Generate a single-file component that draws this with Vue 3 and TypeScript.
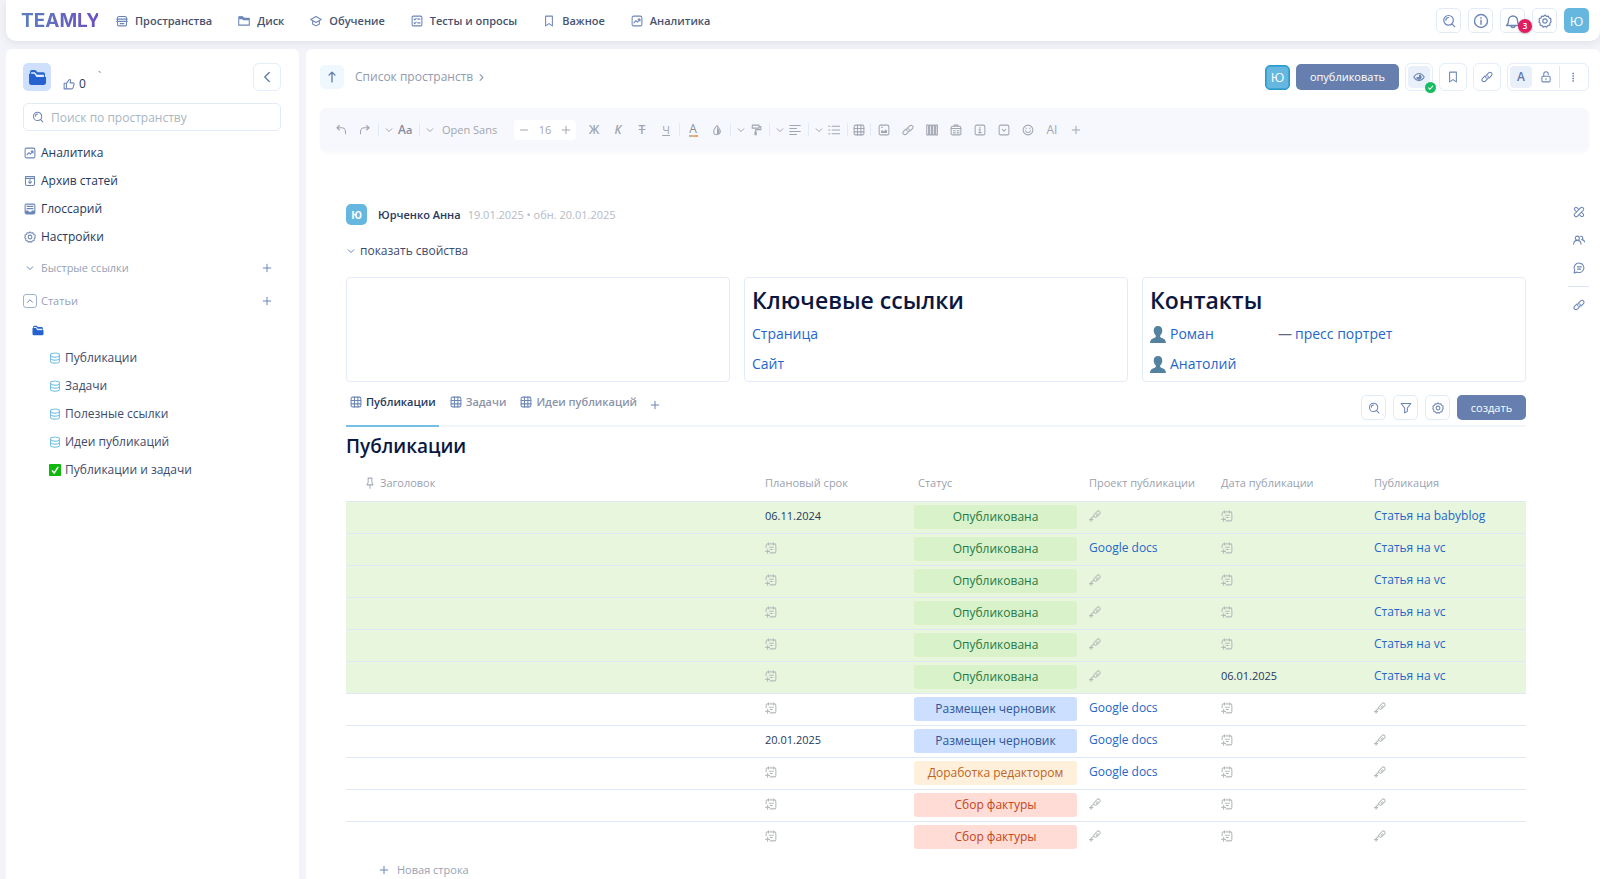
<script setup lang="ts">
import { h, ref } from 'vue'

/* Outline icons on a 16 x 16 grid. A leading "!" marks a filled shape. */
const glyphs: Record<string, string[]> = {
  spaces: ['M2 5V4a2 2 0 0 1 2-2h8a2 2 0 0 1 2 2v9a1.500 1.500 0 0 1-1.500 1.500h-9A1.500 1.500 0 0 1 2 13z', 'M1 5.500h14M1 8.500h14M5.500 11.500h5'],
  disk: ['M1 13.500v-11h5l2 2h7v9z', '!M1.500 2h4.500l2 2h7v3H7L5.500 5.500h-4z'],
  study: ['M8 2 15 6 8 10 1 6z', 'M3.500 8v4L8 14.500l4.500-2.500V8'],
  tests: ['M3 1.500h10A1.500 1.500 0 0 1 14.500 3v10a1.500 1.500 0 0 1-1.500 1.500H3A1.500 1.500 0 0 1 1.500 13V3A1.500 1.500 0 0 1 3 1.500z', 'M4 5.500l1 1 2-2M4 10.500l1 1 2-2M9 5.500h3M9 10.500h3'],
  bookmark: ['M3.500 1.500h9v13L8 11.500l-4.500 3z'],
  chart: ['M3.500 1.500h9a2 2 0 0 1 2 2v9a2 2 0 0 1-2 2h-9a2 2 0 0 1-2-2v-9a2 2 0 0 1 2-2z', 'M4 10.500l2.500-3 2 2L12 5.500M9.500 5.500H12V8'],
  search: ['M13 7.200a5.500 5.500 0 1 1-11 0 5.500 5.500 0 0 1 11 0z', 'M11.500 11.500l3 3M4.500 7a3 3 0 0 1 3-3'],
  info: ['M14.500 8a6.500 6.500 0 1 1-13 0 6.500 6.500 0 0 1 13 0z', 'M8 7.300v4M8 4.600v.6'],
  bell: ['M1.500 12.500c1.500-1 2-2 2-5a4.500 4.500 0 0 1 9 0c0 3 .5 4 2 5zM6 12.500a2 2 0 0 0 4 0'],
  gear: ['M8 1.200l1.700 1.500 2.200-.3.800 2.100 2.100.9-.3 2.200L15 9l-1.400 1.500-.1 2.200-2.200.5L9.800 15 8 14l-2 1-1.300-1.800-2.200-.5-.1-2.200L1 9l.6-1.400-.3-2.200 2.100-.9.800-2.100 2.200.3z', 'M10.500 8a2.500 2.500 0 1 1-5 0 2.500 2.500 0 0 1 5 0z'],
  left: ['M11 2 5 8l6 6'],
  right: ['M5.500 3l5 5-5 5'],
  down: ['M3.500 6 8 10.500 12.500 6'],
  up: ['M4 10l4-4 4 4'],
  arrowUp: ['M8 14.500v-13M4 5.500 8 1.500l4 4'],
  plus: ['M8 2v12M2 8h12'],
  minus: ['M2.500 8h11'],
  like: ['M1.500 7h3v7.500h-3zM4.500 7.500 8 2.500c1.500-1.200 2.500 0 2 1.500L9.500 6.500h4c1 0 1.500.8 1.200 1.800l-1.400 5c-.2.800-.8 1.200-1.500 1.200H4.500'],
  archive: ['M2 2h12v2.500H2zM2 4.500V12a2 2 0 0 0 2 2h8a2 2 0 0 0 2-2V4.500', 'M8 6v5M5.800 9 8 11.200 10.200 9'],
  glossary: ['M3 1.500h10A1.500 1.500 0 0 1 14.500 3v9.500a2 2 0 0 1-2 2h-9a2 2 0 0 1-2-2V3A1.500 1.500 0 0 1 3 1.500z', '!M1.500 10h4l1 1.500h3l1-1.500h4v3l-1.500 1.500H3L1.500 13z', 'M4 4.500h8M4 7.500h8'],
  base: ['M8 1.200c3.500 0 6 1.200 6 2.800S11.500 6.800 8 6.800 2 5.600 2 4s2.500-2.800 6-2.800z', 'M2 4v8c0 1.600 2.500 2.800 6 2.800s6-1.200 6-2.800V4', 'M2 8c0 1.600 2.500 2.800 6 2.800S14 9.600 14 8'],
  eye: ['M1 8c2-3.200 4.200-4.800 7-4.800S13 4.800 15 8c-2 3.200-4.200 4.800-7 4.800S3 11.200 1 8z', '!M8 4.500v3.500H4.500A3.500 3.500 0 1 0 8 4.500z'],
  link: ['M7 9.500a2.600 2.600 0 0 1 0-3.700l3.200-3.200a2.600 2.600 0 0 1 3.700 3.700L11 9.200', 'M9 6.500a2.600 2.600 0 0 1 0 3.700l-3.200 3.200a2.600 2.600 0 0 1-3.700-3.700L5 6.800'],
  unlock: ['M4 7h8a1.500 1.500 0 0 1 1.500 1.500V13a1.500 1.500 0 0 1-1.500 1.500H4A1.500 1.500 0 0 1 2.500 13V8.500A1.500 1.500 0 0 1 4 7z', 'M5 7V4a3 3 0 0 1 6 0v1M8 10v1.500'],
  dots: ['!M7 1h2.500v2.500H7z', '!M7 5h2.500v2.500H7z', '!M7 9h2.500v2.500H7z', '!M7 13h2.500v2.500H7z'],
  undo: ['M6 2 2.500 5 6 8M2.500 5H9a5 5 0 0 1 5 5v3'],
  redo: ['M10 2l3.500 3L10 8M13.500 5H7a5 5 0 0 0-5 5v3'],
  drop: ['M8 2C10.500 5 12.500 7 12.500 9.800a4.500 4.500 0 0 1-9 0C3.500 7 5.500 5 8 2z', '!M8 7v6.500a3.500 3.500 0 0 0 3.500-3.500C11.500 8 9.500 7 8 3z'],
  roller: ['M3 1.500h9v4H3zM12 3.500h2.500v4H7.500v2.500', '!M6 10h3v5H6z'],
  align: ['M1 2h14M1 6h9M1 10h14M1 14h9'],
  list: ['M5.500 3h10M5.500 8h10M5.500 13h10M1 3h1.500M1 8h1.500M1 13h1.500'],
  table: ['M3.500 1.500h9a2 2 0 0 1 2 2v9a2 2 0 0 1-2 2h-9a2 2 0 0 1-2-2v-9a2 2 0 0 1 2-2z', 'M1.500 6h13M1.500 10.500h13M6 1.500v13M10.500 1.500v13'],
  image: ['M3.500 1.500h9a2 2 0 0 1 2 2v9a2 2 0 0 1-2 2h-9a2 2 0 0 1-2-2v-9a2 2 0 0 1 2-2z', '!M4 12V9.500L6 8l2 2 2.500-3L12 9v3z', 'M5 4.500h.8'],
  columns: ['M1 1.500h2.500v13H1zM5 1.500h2.500v13H5zM9 1.500h2.500v13H9zM13 1.500h2.200v13H13z'],
  form: ['M3.500 3h9a2 2 0 0 1 2 2v7.500a2 2 0 0 1-2 2h-9a2 2 0 0 1-2-2V5a2 2 0 0 1 2-2z', 'M5.500 3V1.500h5V3M1.500 6h13M4.500 9H7M9.500 9H12M4.500 11.800H7M9.500 11.800H12'],
  note: ['M3.500 1.500h9a2 2 0 0 1 2 2v9a2 2 0 0 1-2 2h-9a2 2 0 0 1-2-2v-9a2 2 0 0 1 2-2z', 'M6.800 7.500H8v4M6.500 11.500h3M8 4.500v1'],
  fold: ['M3.500 1.500h9a2 2 0 0 1 2 2v9a2 2 0 0 1-2 2h-9a2 2 0 0 1-2-2v-9a2 2 0 0 1 2-2z', 'M5.500 7 8 9.500 10.500 7'],
  smile: ['M14.500 8a6.500 6.500 0 1 1-13 0 6.500 6.500 0 0 1 13 0z', 'M4.800 9c.5 3.200 5.900 3.200 6.400 0M5.500 5.200v1M10.500 5.200v1'],
  filter: ['M1.500 2h13L9.800 8v4.500L6.200 14.500V8z'],
  pin: ['M5.500 1.500h5v6l1.500 3H4l1.500-3zM8 10.500V15'],
  date: ['M4 2.500H3.500a2 2 0 0 0-2 2v3M14.500 9V4.500a2 2 0 0 0-2-2H12M6.500 2.500h3M4.800 1v3M11.200 1v3M14.500 8.500v4a2 2 0 0 1-2 2H7', 'M6 7h5M7 10h3M3.500 10v5M1 12.500h5'],
  addLink: ['M7 9a2.200 2.200 0 0 1 0-3l3.800-4a2.300 2.300 0 0 1 3.300 3.300L10.200 9A2.200 2.200 0 0 1 7 9zM9.500 6.800l1.800-1.800', 'M6 8.500 4 10.500M2.800 10.500v4.500M.5 12.800h4.600'],
  tools: ['M10 2.500a2 2 0 1 1 3.500 3.500L6 13.500a2 2 0 1 1-3.500-3.500z', 'M5.500 2.500a2 2 0 1 0-3 3L5 8M8 5 5.500 2.500M11 8l2.500 2.500a2 2 0 1 1-3 3L8 11'],
  people: ['M8.500 5.500a2.700 2.700 0 1 1-5.400 0 2.700 2.700 0 0 1 5.400 0z', 'M.8 13.500C1 10.500 3 8.500 5.800 8.500s4.700 2 5 5M10 3a2.200 2.200 0 1 1 1.500 4.500c2 0 3.500 1 4 3'],
  chat: ['M8.500 1.500a6.300 6.300 0 1 1-3 12l-4 1 .8-4A6.200 6.200 0 0 1 8.500 1.500z', 'M6 6.500h5M6 9.500h4'],
}

const Icon = (props: { name: string }) =>
  h(
    'svg',
    { viewBox: '0 0 16 16', 'aria-hidden': 'true' },
    glyphs[props.name].map((d) =>
      d[0] === '!' ? h('path', { d: d.slice(1), fill: 'currentColor', stroke: 'none' }) : h('path', { d }),
    ),
  )
Icon.props = ['name']

const sections = [
  { icon: 'spaces', label: 'Пространства' },
  { icon: 'disk', label: 'Диск' },
  { icon: 'study', label: 'Обучение' },
  { icon: 'tests', label: 'Тесты и опросы' },
  { icon: 'bookmark', label: 'Важное' },
  { icon: 'chart', label: 'Аналитика' },
]

const spaceLinks = [
  { icon: 'chart', label: 'Аналитика' },
  { icon: 'archive', label: 'Архив статей' },
  { icon: 'glossary', label: 'Глоссарий' },
  { icon: 'gear', label: 'Настройки' },
]

const articles = ['Публикации', 'Задачи', 'Полезные ссылки', 'Идеи публикаций']

const inserts = [
  { icon: 'image', label: 'Изображение' },
  { icon: 'link', label: 'Ссылка' },
  { icon: 'columns', label: 'Колонки' },
  { icon: 'form', label: 'Умная таблица' },
  { icon: 'note', label: 'Заметка' },
  { icon: 'fold', label: 'Скрытый блок' },
  { icon: 'smile', label: 'Эмодзи' },
]

const tabs = ['Публикации', 'Задачи', 'Идеи публикаций']
const activeTab = ref(0)
const query = ref('')

type Tone = 'green' | 'blue' | 'amber' | 'red'
interface Row {
  due?: string
  status: string
  tone: Tone
  project?: string
  published?: string
  post?: string
}

const done = { status: 'Опубликована', tone: 'green' as Tone }
const draft = { status: 'Размещен черновик', tone: 'blue' as Tone, project: 'Google docs' }
const facts = { status: 'Сбор фактуры', tone: 'red' as Tone }

const rows: Row[] = [
  { ...done, due: '06.11.2024', post: 'Статья на babyblog' },
  { ...done, project: 'Google docs', post: 'Статья на vc' },
  { ...done, post: 'Статья на vc' },
  { ...done, post: 'Статья на vc' },
  { ...done, post: 'Статья на vc' },
  { ...done, published: '06.01.2025', post: 'Статья на vc' },
  { ...draft },
  { ...draft, due: '20.01.2025' },
  { status: 'Доработка редактором', tone: 'amber', project: 'Google docs' },
  { ...facts },
  { ...facts },
]
</script>

<template>
  <div class="page">
    <header class="header">
      <a class="logo" href="#">TEAMLY</a>
      <nav class="sections">
        <a v-for="s in sections" :key="s.label" class="section" href="#">
          <Icon :name="s.icon" class="icon" />{{ s.label }}
        </a>
      </nav>
      <div class="header-actions">
        <button class="square" aria-label="Поиск"><Icon name="search" class="icon medium" /></button>
        <button class="square" aria-label="Справка"><Icon name="info" class="icon large" /></button>
        <button class="square bell" aria-label="Уведомления">
          <Icon name="bell" class="icon large" /><span class="count">3</span>
        </button>
        <button class="square" aria-label="Настройки"><Icon name="gear" class="icon medium" /></button>
        <button class="avatar" aria-label="Профиль">Ю</button>
      </div>
    </header>

    <div class="body">
      <aside class="sidebar">
        <div class="space-head">
          <span class="space-tile">
            <svg class="folder large" viewBox="0 0 16 16" aria-hidden="true">
              <path class="folder-back" d="M1 2.500Q1 1 2.500 1H6l2 2h5.500Q15 3 15 4.500V9H1z" />
              <path class="folder-paper" d="M2 3h3.500l2 2.500H14v3H2z" />
              <path class="folder-front" d="M0 4.500h5L7 7.500h9V13q0 2-2 2H2q-2 0-2-2z" />
            </svg>
          </span>
          <button class="likes" aria-label="Нравится"><Icon name="like" class="icon" />0</button>
          <span class="tick">`</span>
          <button class="tile-button collapse" aria-label="Свернуть панель"><Icon name="left" class="icon strong" /></button>
        </div>
        <label class="search">
          <Icon name="search" class="icon" />
          <input v-model="query" type="text" placeholder="Поиск по пространству" aria-label="Поиск по пространству" />
        </label>
        <nav class="space-links">
          <a v-for="l in spaceLinks" :key="l.label" href="#"><Icon :name="l.icon" class="icon" />{{ l.label }}</a>
        </nav>
        <div class="group">
          <button class="group-toggle"><Icon name="down" class="icon tiny" />Быстрые ссылки</button>
          <button class="add" aria-label="Добавить ссылку"><Icon name="plus" class="icon tiny" /></button>
        </div>
        <div class="group">
          <button class="group-toggle"><span class="boxed"><Icon name="up" class="icon tiny" /></span>Статьи</button>
          <button class="add" aria-label="Добавить статью"><Icon name="plus" class="icon tiny" /></button>
        </div>
        <nav class="tree">
          <a class="root" href="#" aria-label="Пространство">
            <svg class="folder" viewBox="0 0 16 16" aria-hidden="true">
              <path class="folder-back" d="M1 2.500Q1 1 2.500 1H6l2 2h5.500Q15 3 15 4.500V9H1z" />
              <path class="folder-paper" d="M2 3h3.500l2 2.500H14v3H2z" />
              <path class="folder-front" d="M0 4.500h5L7 7.500h9V13q0 2-2 2H2q-2 0-2-2z" />
            </svg>
          </a>
          <a v-for="a in articles" :key="a" class="leaf" href="#"><Icon name="base" class="icon base" />{{ a }}</a>
          <a class="leaf" href="#">
            <svg class="check" viewBox="0 0 12 12" aria-hidden="true">
              <rect width="12" height="12" rx="1" /><path d="M3 6.500 5.200 9 9.200 2.800" />
            </svg>
            Публикации и задачи
          </a>
        </nav>
      </aside>

      <main class="main">
        <div class="topbar">
          <button class="go-up" aria-label="Наверх"><Icon name="arrowUp" class="icon strong" /></button>
          <a class="crumb" href="#">Список пространств<Icon name="right" class="icon" /></a>
          <div class="page-actions">
            <button class="avatar editing" aria-label="Редактирует">Ю</button>
            <button class="primary publish">опубликовать</button>
            <button class="tile-button view" aria-label="Просмотр">
              <span class="lit"><Icon name="eye" class="icon" /></span>
              <svg class="ok" viewBox="0 0 10 10" aria-hidden="true">
                <circle cx="5" cy="5" r="5" /><path d="M3 5.200 4.500 6.600 7.200 3.600" />
              </svg>
            </button>
            <button class="tile-button" aria-label="В закладки"><Icon name="bookmark" class="icon" /></button>
            <button class="tile-button" aria-label="Ссылка"><Icon name="link" class="icon" /></button>
            <div class="modes">
              <button class="lit" aria-label="Текст">A</button>
              <button class="mode" aria-label="Доступ"><Icon name="unlock" class="icon" /></button>
              <button class="mode more" aria-label="Ещё"><Icon name="dots" class="icon tiny" /></button>
            </div>
          </div>
        </div>

        <div class="toolbar" role="toolbar" aria-label="Форматирование">
          <button class="tool" aria-label="Отменить"><Icon name="undo" class="icon" /></button>
          <button class="tool" aria-label="Повторить"><Icon name="redo" class="icon" /></button>
          <i class="sep"></i>
          <button class="chev" aria-label="Стили"><Icon name="down" class="icon tiny" /></button>
          <button class="tool case" aria-label="Регистр">A<small>a</small></button>
          <i class="sep"></i>
          <button class="chev" aria-label="Шрифты"><Icon name="down" class="icon tiny" /></button>
          <button class="family">Open Sans</button>
          <div class="size">
            <button aria-label="Меньше"><Icon name="minus" class="icon tiny" /></button>
            <input type="text" value="16" aria-label="Размер шрифта" />
            <button aria-label="Больше"><Icon name="plus" class="icon tiny" /></button>
          </div>
          <button class="tool"><b>Ж</b></button>
          <button class="tool"><b><em>К</em></b></button>
          <button class="tool"><s><b>T</b></s></button>
          <button class="tool under"><u>Ч</u></button>
          <i class="sep"></i>
          <button class="tool" aria-label="Цвет текста"><span class="ink">A</span></button>
          <button class="tool" aria-label="Заливка"><Icon name="drop" class="icon" /></button>
          <i class="sep"></i>
          <button class="chev" aria-label="Формат"><Icon name="down" class="icon tiny" /></button>
          <button class="tool split" aria-label="Копировать формат"><Icon name="roller" class="icon" /></button>
          <i class="sep"></i>
          <button class="chev" aria-label="Варианты выравнивания"><Icon name="down" class="icon tiny" /></button>
          <button class="tool split" aria-label="Выравнивание"><Icon name="align" class="icon" /></button>
          <i class="sep"></i>
          <button class="chev" aria-label="Варианты списка"><Icon name="down" class="icon tiny" /></button>
          <button class="tool split" aria-label="Список"><Icon name="list" class="icon" /></button>
          <i class="sep"></i>
          <button class="tool snug" aria-label="Таблица"><Icon name="table" class="icon" /></button>
          <i class="sep"></i>
          <button v-for="t in inserts" :key="t.icon" class="tool" :aria-label="t.label"><Icon :name="t.icon" class="icon" /></button>
          <button class="tool ai">AI</button>
          <button class="tool" aria-label="Ещё блоки"><Icon name="plus" class="icon tiny" /></button>
        </div>

        <div class="content">
          <article class="article">
            <div class="meta">
              <span class="avatar small">Ю</span>
              <strong>Юрченко Анна</strong>
              <span class="dates">19.01.2025 • обн. 20.01.2025</span>
            </div>
            <button class="props"><Icon name="down" class="icon tiny" />показать свойства</button>

            <div class="cards">
              <section class="card"></section>
              <section class="card">
                <h1>Ключевые ссылки</h1>
                <p><a href="#">Страница</a></p>
                <p><a href="#">Сайт</a></p>
              </section>
              <section class="card">
                <h1>Контакты</h1>
                <p v-for="(name, i) in ['Роман', 'Анатолий']" :key="name" class="person">
                  <svg class="bust" viewBox="0 0 16 17" aria-hidden="true">
                    <path d="M8 0c2.800 0 4.300 2 4.300 4.600 0 2.200-.9 3.800-2.100 4.900-.3 1.500.2 2 1.500 2.400 2.600.8 4 1.700 4.300 5.100H0c.3-3.400 1.700-4.300 4.300-5.100 1.300-.4 1.800-.9 1.500-2.400C4.600 8.400 3.700 6.800 3.700 4.600 3.700 2 5.200 0 8 0z" />
                  </svg>
                  <a href="#" class="who">{{ name }}</a>
                  <template v-if="i === 0"><span class="dash">—</span><a href="#">пресс портрет</a></template>
                </p>
              </section>
            </div>

            <div class="tabs">
              <button v-for="(t, i) in tabs" :key="t" class="tab" :class="{ active: i === activeTab }" @click="activeTab = i">
                <Icon name="table" class="icon" />{{ t }}
              </button>
              <button class="tab-add" aria-label="Добавить вкладку"><Icon name="plus" class="icon tiny" /></button>
              <div class="tab-actions">
                <button class="square" aria-label="Поиск"><Icon name="search" class="icon" /></button>
                <button class="square" aria-label="Фильтр"><Icon name="filter" class="icon" /></button>
                <button class="square" aria-label="Настройки"><Icon name="gear" class="icon" /></button>
                <button class="primary create">создать</button>
              </div>
            </div>

            <h2>Публикации</h2>
            <table>
              <colgroup>
                <col /><col class="c-due" /><col class="c-status" /><col class="c-project" /><col class="c-due" /><col class="c-post" />
              </colgroup>
              <thead>
                <tr>
                  <th class="title"><Icon name="pin" class="icon" />Заголовок</th>
                  <th>Плановый срок</th>
                  <th>Статус</th>
                  <th>Проект публикации</th>
                  <th>Дата публикации</th>
                  <th>Публикация</th>
                </tr>
              </thead>
              <tbody>
                <tr v-for="(r, i) in rows" :key="i" :class="{ done: r.tone === 'green' }">
                  <td></td>
                  <td><template v-if="r.due">{{ r.due }}</template><Icon v-else name="date" class="icon blank" /></td>
                  <td class="status"><span class="badge" :class="r.tone">{{ r.status }}</span></td>
                  <td><a v-if="r.project" href="#">{{ r.project }}</a><Icon v-else name="addLink" class="icon blank" /></td>
                  <td><template v-if="r.published">{{ r.published }}</template><Icon v-else name="date" class="icon blank" /></td>
                  <td><a v-if="r.post" href="#">{{ r.post }}</a><Icon v-else name="addLink" class="icon blank" /></td>
                </tr>
              </tbody>
            </table>
            <button class="new-row"><Icon name="plus" class="icon tiny" />Новая строка</button>
          </article>

          <div class="rail">
            <button aria-label="Инструменты"><Icon name="tools" class="icon" /></button>
            <button aria-label="Участники"><Icon name="people" class="icon" /></button>
            <button aria-label="Комментарии"><Icon name="chat" class="icon" /></button>
            <hr />
            <button aria-label="Ссылки"><Icon name="link" class="icon" /></button>
          </div>
        </div>
      </main>
    </div>
  </div>
</template>

<style>
body {
  margin: 0;
  background: #f3f4f9;
}
</style>

<style scoped>
.page {
  display: flex;
  flex-direction: column;
  height: 100vh;
  overflow: hidden;
  background: #f3f4f9;
  color: #26385c;
  font: 12px/20px 'Open Sans', 'Noto Sans', sans-serif;
}
.page *,
.page *::before {
  box-sizing: border-box;
}
button {
  display: inline-flex;
  align-items: center;
  justify-content: center;
  padding: 0;
  border: 0;
  background: none;
  color: inherit;
  font: inherit;
  cursor: pointer;
}
input {
  min-width: 0;
  padding: 0;
  border: 0;
  outline: 0;
  background: none;
  color: inherit;
  font: inherit;
}
a {
  color: inherit;
  text-decoration: none;
}
.icon {
  flex: none;
  width: 12px;
  height: 12px;
  fill: none;
  stroke: currentColor;
  stroke-width: 1.4;
  stroke-linecap: round;
  stroke-linejoin: round;
  color: #6c86b8;
}
.icon.medium {
  width: 14px;
  height: 14px;
}
.icon.large {
  width: 16px;
  height: 16px;
}
.icon.tiny {
  width: 10px;
  height: 10px;
  stroke-width: 1.6;
}
.icon.strong {
  stroke-width: 1.8;
  color: #5f7bb0;
}

/* header */
.header {
  flex: none;
  display: flex;
  align-items: center;
  height: 41px;
  margin-left: 6px;
  padding: 0 11px 0 15px;
  border-radius: 0 0 10px 10px;
  background: #fff;
  box-shadow: 0 2px 8px #2638581a;
}
.logo {
  width: 77px;
  margin-right: 18px;
  background: linear-gradient(90deg, #5b80bb, #6c50c4);
  background-clip: text;
  color: transparent;
  font: 700 19px/24px Inter, sans-serif;
}
.sections {
  display: flex;
  gap: 26px;
}
.section {
  display: flex;
  align-items: center;
  gap: 7px;
  color: #46536f;
  font-size: 11px;
  font-weight: 600;
}
.header-actions {
  display: flex;
  gap: 7px;
  margin-left: auto;
}
.square {
  width: 25px;
  height: 25px;
  border: 1px solid #e2ebf8;
  border-radius: 5px;
  background: #fff;
}
.bell {
  position: relative;
}
.count {
  position: absolute;
  top: 10px;
  left: 17px;
  width: 14px;
  height: 14px;
  border-radius: 7px;
  background: #e11d62;
  box-shadow: 0 1px 2px #0004;
  color: #fff;
  font-size: 8px;
  font-weight: 600;
  line-height: 14px;
}
.avatar {
  display: inline-flex;
  align-items: center;
  justify-content: center;
  width: 25px;
  height: 25px;
  border-radius: 5px;
  background: #65b7e0;
  color: #fff;
  font-size: 13px;
}

/* columns */
.body {
  flex: 1;
  min-height: 0;
  display: grid;
  grid-template-columns: 293px minmax(0, 1fr);
  gap: 7px;
  padding: 8px 0 0 6px;
}
.sidebar,
.main {
  border-radius: 6px 6px 0 0;
  background: #fff;
}

/* sidebar */
.sidebar {
  padding: 14px 18px 0 17px;
}
.space-head {
  display: flex;
  align-items: center;
  height: 28px;
}
.space-tile {
  display: flex;
  align-items: center;
  justify-content: center;
  width: 28px;
  height: 28px;
  border-radius: 5px;
  background: #cfe0ff;
}
.folder {
  width: 12px;
  height: 11px;
}
.folder.large {
  width: 17px;
  height: 17px;
}
.folder-back {
  fill: #2a66cc;
}
.folder-paper {
  fill: #e4efff;
}
.folder-front {
  fill: #2562cf;
}
.likes {
  align-self: flex-end;
  gap: 4px;
  height: 16px;
  margin: 0 0 -1px 12px;
}
.tick {
  margin-left: 12px;
  color: #7e8ba6;
}
.tile-button {
  position: relative;
  width: 28px;
  height: 28px;
  border: 1px solid #e4edf9;
  border-radius: 6px;
  background: #fff;
}
.collapse {
  margin-left: auto;
}
.search {
  display: flex;
  align-items: center;
  gap: 7px;
  height: 28px;
  margin-top: 12px;
  padding: 0 8px;
  border: 1px solid #e2ebf8;
  border-radius: 5px;
}
.search input {
  flex: 1;
  height: 24px;
}
.search input::placeholder {
  color: #a9b5bf;
  opacity: 1;
}
.space-links {
  display: grid;
  margin-top: 8px;
}
.space-links a {
  display: flex;
  align-items: center;
  gap: 5px;
  height: 28px;
  padding-left: 1px;
}
.group {
  display: flex;
  align-items: center;
  justify-content: space-between;
  height: 33px;
  padding-right: 9px;
}
.group-toggle {
  gap: 4px;
  color: #98a2b5;
  font-size: 11px;
}
.group-toggle > .icon {
  margin: 0 2px;
}
.boxed {
  display: flex;
  align-items: center;
  justify-content: center;
  width: 14px;
  height: 14px;
  border: 1px solid #9fb1d4;
  border-radius: 3px;
}
.tree a {
  display: flex;
  align-items: center;
  height: 28px;
}
.tree .root {
  height: 26px;
  padding-left: 9px;
}
.tree .leaf {
  gap: 4px;
  padding-left: 26px;
  color: #3d4b6b;
}
.root + .leaf {
  margin-top: 1px;
}
.base {
  color: #79c3e8;
}
.check {
  width: 12px;
  height: 12px;
  fill: #0fb80f;
}
.check path {
  fill: none;
  stroke: #fff;
  stroke-width: 1.4;
}

/* main top */
.main {
  padding: 14px 11px 0 14px;
}
.topbar {
  display: flex;
  align-items: center;
  height: 28px;
}
.go-up {
  width: 24px;
  height: 24px;
  border-radius: 5px;
  background: #eff8ff;
}
.crumb {
  display: flex;
  align-items: center;
  gap: 4px;
  margin-left: 11px;
  color: #919bad;
}
.crumb .icon {
  width: 9px;
  height: 9px;
  stroke-width: 2;
  color: #919bad;
}
.page-actions {
  display: flex;
  align-items: center;
  gap: 6px;
  margin-left: auto;
}
.editing {
  border: 1px solid #2a9bcb;
  box-shadow: inset 0 0 0 1px #3fa6d4;
}
.primary {
  height: 26px;
  border-radius: 5px;
  background: #667fae;
  color: #fff;
  font-size: 11px;
}
.publish {
  width: 103px;
}
.lit {
  display: inline-flex;
  align-items: center;
  justify-content: center;
  width: 22px;
  height: 22px;
  border-radius: 4px;
  background: #e9f0fa;
  color: #6179aa;
  font-size: 12px;
  font-weight: 600;
}
.ok {
  position: absolute;
  right: -4px;
  bottom: -3px;
  width: 11px;
  height: 11px;
  fill: #17bd63;
}
.ok path {
  fill: none;
  stroke: #fff;
}
.modes {
  display: flex;
  align-items: center;
  height: 28px;
  padding: 0 2px;
  border: 1px solid #e4edf9;
  border-radius: 6px;
}
.mode {
  width: 27px;
  height: 22px;
}
.more {
  border-left: 1px solid #dbe7f8;
}

/* toolbar */
.toolbar {
  display: flex;
  align-items: center;
  height: 43px;
  margin-top: 17px;
  padding-left: 9px;
  border-radius: 7px;
  background: #f7f8fd;
  box-shadow: 0 2px 3px #26385808;
  color: #a2a6af;
}
.toolbar .icon {
  color: #a0a5b0;
}
.toolbar button {
  height: 20px;
}
.tool {
  width: 24px;
}
.chev {
  width: 18px;
}
.toolbar .case {
  justify-content: flex-start;
  align-items: baseline;
  width: 20px;
  color: #858d9e;
  font-weight: 600;
}
.case small {
  font-size: 11px;
}
.toolbar .split {
  justify-content: flex-start;
  width: 18px;
}
.toolbar .snug {
  width: 20px;
}
.sep {
  width: 1px;
  height: 13px;
  margin: 0 1px;
  background: #e0ebf9;
}
.family {
  justify-content: flex-start;
  width: 75px;
  padding-left: 3px;
  font-size: 11px;
}
.size {
  display: flex;
  align-items: center;
  width: 62px;
  height: 20px;
  margin-right: 6px;
  border-radius: 4px;
  background: #fff;
  font-size: 11px;
}
.size button {
  flex: none;
  width: 20px;
}
.size input {
  flex: 1;
  width: 0;
  text-align: center;
}
.toolbar b {
  font-weight: 600;
}
.under {
  font-size: 11px;
}
.ink {
  width: 9px;
  border-bottom: 2px solid;
  border-image: linear-gradient(90deg, #6ec5ee, #f3b36c, #f08a7a) 1;
  color: #858d9e;
  line-height: 12px;
  text-align: center;
}

/* article */
.content {
  display: flex;
  gap: 42px;
  margin: 53px 0 0 26px;
}
.article {
  flex: 1;
  min-width: 0;
}
.meta {
  display: flex;
  align-items: center;
  height: 21px;
  font-size: 11px;
}
.meta strong {
  margin-left: 11px;
  font-weight: 600;
}
.dates {
  margin-left: 7px;
  color: #b4bac6;
}
.small {
  width: 21px;
  height: 21px;
  font-size: 10px;
  font-weight: 700;
}
.props {
  gap: 4px;
  height: 20px;
  margin-top: 16px;
  color: #3d4b6b;
}
.cards {
  display: grid;
  grid-template-columns: repeat(3, minmax(0, 1fr));
  gap: 14px;
  margin-top: 15px;
}
.card {
  min-height: 105px;
  padding: 8px 7px 0;
  border: 1px solid #e3ebf8;
  border-radius: 4px;
}
h1,
h2 {
  margin: 0;
  color: #0b1741;
  font-weight: 600;
}
h1 {
  font-size: 23px;
  line-height: 28px;
}
.card p {
  height: 20px;
  margin: 10px 0 0;
  font-size: 14px;
}
.card a,
td a {
  color: #2566c9;
}
.card .person {
  display: flex;
  align-items: center;
}
.bust {
  width: 16px;
  height: 17px;
  margin-right: 4px;
  fill: #54819e;
}
.who {
  width: 108px;
}
.dash {
  margin-right: 3px;
  color: #5d6a85;
}
.tabs {
  display: flex;
  align-items: flex-start;
  height: 45px;
  border-bottom: 2px solid #eff5fb;
}
.tab {
  gap: 4px;
  height: 45px;
  padding: 0 3px 3px 4px;
  border-bottom: 2px solid transparent;
  color: #8b93a8;
  font-size: 11px;
  font-weight: 600;
}
.tab + .tab {
  margin-left: 7px;
}
.tab.active {
  border-color: #74bfe4;
  color: #26385c;
}
.tab-add {
  height: 46px;
  margin-left: 10px;
}
.tab-actions {
  display: flex;
  gap: 7px;
  margin: 13px 0 0 auto;
}
.create {
  width: 69px;
  height: 25px;
}
h2 {
  margin-top: 5px;
  font-size: 19px;
  line-height: 28px;
}
table {
  width: 100%;
  margin-top: 9px;
  border-collapse: collapse;
  table-layout: fixed;
}
.c-due {
  width: 153px;
}
.c-status {
  width: 171px;
}
.c-project {
  width: 132px;
}
.c-post {
  width: 160px;
}
th {
  height: 32px;
  padding: 0 8px 4px;
  color: #9aa2b0;
  font-size: 11px;
  font-weight: 400;
  text-align: left;
  white-space: nowrap;
}
.title {
  padding-left: 18px;
}
.title .icon {
  margin-right: 4px;
  vertical-align: -2px;
  color: #a3aab8;
}
td {
  height: 32px;
  padding: 0 8px 2px;
  border-top: 1px solid #dfe8f5;
  font-size: 11px;
  line-height: 20px;
  white-space: nowrap;
}
td a {
  font-size: 12px;
}
.done {
  background: #e8f6de;
}
.blank {
  display: block;
  color: #b5b9bb;
}
td.status {
  padding: 0 4px;
}
.badge {
  display: block;
  height: 24px;
  border-radius: 3px;
  font-size: 12px;
  line-height: 24px;
  text-align: center;
}
.badge.green {
  background: #d9f2ca;
  color: #237a45;
}
.badge.blue {
  background: #ccdffe;
  color: #2f5597;
}
.badge.amber {
  background: #fff0db;
  color: #bd6522;
}
.badge.red {
  background: #ffdcd6;
  color: #c2461f;
}
.new-row {
  gap: 8px;
  height: 20px;
  margin: 7px 0 0 33px;
  color: #98a2b5;
  font-size: 11px;
}
.rail {
  display: flex;
  flex-direction: column;
  gap: 8px;
  width: 21px;
  margin-top: -2px;
}
.rail button {
  height: 20px;
}
.rail hr {
  width: 100%;
  height: 1px;
  margin: 0;
  border: 0;
  background: #dbe5f5;
}
</style>
